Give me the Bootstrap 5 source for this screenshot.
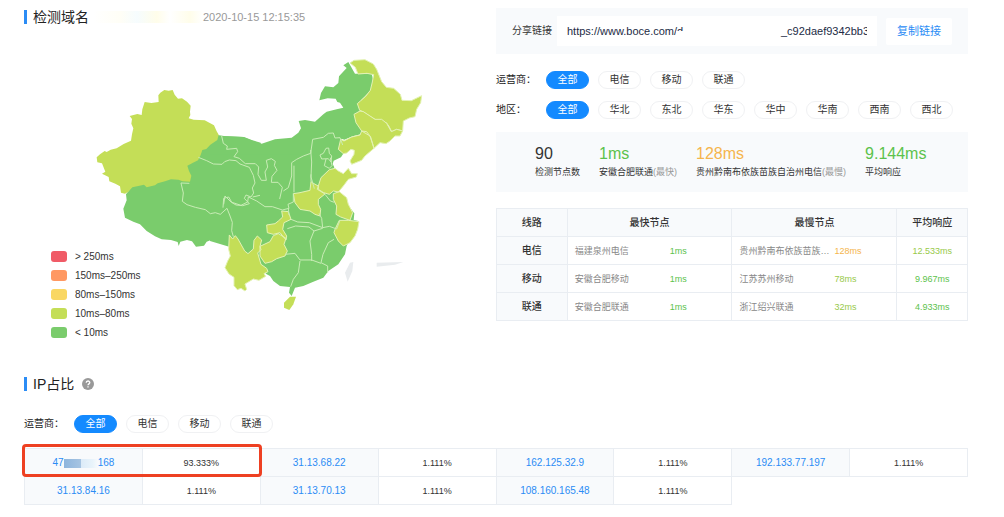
<!DOCTYPE html>
<html lang="zh-CN">
<head>
<meta charset="utf-8">
<meta name="viewport" content="width=device-width, initial-scale=1">
<title>检测域名</title>
<link href="https://cdn.jsdelivr.net/npm/bootstrap@5.3.0/dist/css/bootstrap.min.css" rel="stylesheet">
<style>
body{font-family:"Liberation Sans","Noto Sans CJK SC",sans-serif;font-size:10px;line-height:16px;color:#333;background:#fff}
.page{padding:8px 36px 13px 24px}
.title-bar{padding-top:1px;margin-bottom:26px}
.section-title{font-size:14px;line-height:20px;font-weight:400;color:#222;border-left:3px solid #2b8cf5;padding-left:6px;height:14px;margin:0}
.stamp{font-size:11px;color:#999}
.smudge{width:110px;height:12px;background:linear-gradient(90deg,#fff,#fffef6 25%,#f6fcfe 40%,#fffdea 58%,#fff 70%,#fffdea 88%,#fff)}
.map-box{max-width:430px}
.legend{left:27px;bottom:0;line-height:19px}
.swatch{width:16px;height:11px;border-radius:3px}
.panel{background:#f8fafc}
.share{height:46px;padding:0 16px}
.share label{width:45px}
.share input{height:30px;border:0;padding:0 10px;font-size:11px;color:#222b45;background:#fff;outline:0}
.share input:focus{outline:1px solid #b9dcff}
.veil{left:119px;top:15px;width:12px;height:9px;background:#fff}
.btn-copy{font-size:11px;line-height:16px;width:66px;height:27px;padding:0;margin-left:9px;background:#fff;color:#2b8cf5;border:0;border-radius:2px}
.filters{margin-top:17px}
.filters+.filters{margin-top:12px}
.filter-name{width:50px;color:#222}
.btn-pill{width:43px;height:18px;padding:0;font-size:10px;line-height:16px;border:1px solid #f0f1f3;border-radius:9px;background:#fff;color:#333}
.btn-pill.active{background:#148aff;border-color:#148aff;color:#fff}
.pills{gap:9px}
.stats{height:60px;padding:12px 36px 0 39px;margin:13px 0 16px;gap:19px;font-size:9px}
.stats strong{display:block;font-size:16px;line-height:20px;font-weight:400}
.stats small{font-size:9px;color:#999}
.data{margin:0;table-layout:fixed;font-size:9px;line-height:14px;color:#333}
.data>*>tr>*{padding:7px 7px 6px;background:none;border:1px solid #e9edf2;vertical-align:middle;color:inherit;text-align:center}
.data th{font-size:10px;font-weight:500}
.data .tint{background:#f8fafc}
.page .c-g{color:#5cc24c}
.page .c-l{color:#98c94a}
.page .c-o{color:#f5b54d}
.node{width:95px;flex:none;color:#888;text-align:left}
.ip a{font-size:10px;color:#2b8cf5;text-decoration:none}
.mosaic{width:34px;height:9px;background:linear-gradient(90deg,#8db5dd 0,#a6c4e2 50%,#dcebf8 51%,#e9f4fb 85%,#f8fafc)}
.red-frame{left:-2px;top:-4px;width:calc(25% + 4px);height:33px;border:3px solid #ee4022;border-radius:4px;pointer-events:none}
.ip-section{margin-top:35px}
.ip-section .filters{margin-top:24px}
.ip-box{margin-top:15px}
</style>
</head>
<body>
<main class="page">
<div class="row g-0">
<section class="col-6">
<div class="title-bar d-flex align-items-center">
<h1 class="section-title d-flex align-items-center">检测域名</h1><span class="smudge ms-1"></span><time class="stamp">2020-10-15 12:15:35</time>
</div>
<div class="map-box position-relative">
<svg class="d-block w-100" viewBox="24 50 430 291" role="img" aria-label="中国地图">
<g fill="#7acc6c">
<path transform="translate(100 150) scale(.33333)" d="M78 130l2 18-10 25 5 27 25 12 20 8 20 20 25 16 20 9 28 2 20 6 3 12 5-13 20-5 15 4 12 16 24-3 8-12 26-10 18 6 10-10 13-2 15 20 40 27 40 0V-25l-25-7-25-10-60-3-19-3L180 0z"/>
<path transform="translate(220 50) scale(.33333)" d="M0 255l70 3 30 12 25 8 40-13 50-5 20-15 8-13-7-22 19-3 30 5 25-22 10-8 30-7 20-5-10-15-8-2-5-10-24-1-25 6 5-22 12-20 25 3 15-13 2-20 23-25-10-8 15-10 20 35h50l5 20-7 30-30 30 0 30-15 10 5 25 17 20-7 17-25 6-25 10-8-3-4 25 10 18-8 13-22 10-3 10 5 10-25 45-10 65H0z"/>
<path transform="translate(210 160) scale(.33333)" d="M0-20h310l45 45 30 70 48 62-2 20 14 3-35 75-5 25-20 30-30 20-15 20-30 12-30 13-25 5-10 25-8-10 3-17-30-3-20-15-10-15-10-5-70-70L0 240z"/>
</g>
<g fill="#c4de57" stroke="#e3f2b4" stroke-width="3" stroke-linejoin="round">
<path stroke="none" transform="translate(90 50) scale(.33333)" d="M236 119l12-2 6 14 10 12 12-1 15 10 11 12-2 18 1 10-5 10 15 4 33 2 28 15 8 18 6 10-4 16-21 14-12 13-12 3-5 15-8 16-15 7-17 9 5 16 7 14-4 18-22-1-13-5-22-1-18 6-22 6-8 6-25 6-8-8-17 4-18 4-12 13-10 6-12-3-3-19-14-8-18-7-2-13-20-10 10-6-10-25-14-3-2-15 10-9 14-10 6 3 12-7 18-4 21-13 22-10 3-19 4-18-6-14 2-14-7-9 23-6 13 3 2-17 7-22 20 3 22-3-1-20 6-8 12-8z"/>
<path transform="translate(220 50) scale(.33333)" d="M390 36l12-8 33-2 25 13 10 16 15 37 14 17 22 3 20 18 5 18 28 1 31-15-3 21-12 20-5 22-17 4-18 9-2 30-18-5-15 7-8-16-8-11-20-2-14-8-16-10-20-13-10-4-7-20 25-22 14-18 6-25 4-22-20-4-27 2-8-20z"/>
<path transform="translate(220 50) scale(.33333)" d="M420 180l10 2 20 13 15 10 20 0 15 12 14 25 16-7 18 5-8 15-15 0-15 15-12 8-18-3-18 17-12-37-25-15-17-25-6-25zM425 240l15 2 12 16 10 34-27 23-10 13-30 12-5-10 12-20 1-12-10-3-13 11-10 2-15-13 7-30 10 5 23-12 25-6z"/>
<path transform="translate(210 160) scale(.33333)" d="M325 75l8-25 25-24 17-4 10 8 15 8 15-16 10 16 17 0-3 10-24 7-15 20-15 18-15-3-12 10-17-5-16-10zM250 98l20-3 30-7 3-26 9 6 13 7-3 10 23 14-20 16 0 15 7 15-2 20-15-5-15-10-30-5-15-20zM370 98l18-6 22 18 5 20 13 25-8 23-28-10-14-8 2-25-10-20zM388 178l27 0 32 4-4 23-8 20-15 20-20 10-15-15-13-25 3-10zM215 150l20 2 8 23-21 10-4 20 12 20-2 12-18-22-20 5-18-5-2-23 25-4 10-8 13-12zM150 256l30-14 10-18 15-6 23 14-6 18 10 20-7 15-25 8-15 9-20 5-15-22zM58 222l10 12 8-10 8 10 20 36 10 8 16-14 2-26 10-13 13 12-5 19 3 10-10 10 10 34 17 12 4 10-12 6 5 8-20 12-17-4-25 15 5 16-5 5-12-8-11 4-10-12 0-25-15-10-12-19 8-20 8-15-5-20z"/>
<path stroke="none" transform="translate(210 160) scale(.33333)" d="M222 425l18-18 18 0-8 23-12 17-16-7z"/>
</g>
<g fill="none" stroke="#c9ecb6" stroke-width="3" stroke-linejoin="round">
<path transform="translate(100 150) scale(.33333)" d="M268 97l-25-1 7 30-3 25 14 10 25 8 30 7 15 12 15-3 15 5 20-18 8 20 8 22-2 25 5 18M369 170l2-28 15-4 10 17 12 7 20 2 20-6-15-16 5-10 15 6 8-12-4-15 8-15-5-23-12-24-28-10-12-10-20-2-14 5-8 8-26-1-20-10-25-10M458 138l22-5"/>
<path transform="translate(220 50) scale(.33333)" d="M5 255l5 22 12 8-2 10 30-3 3 10-11 15 16 5 18 16 30 0 10 10-2 22 10 18 15 0-4-25 8-15-4-20 15-5 12 8-3 12 8 15-15 18-2 18 20 0 13 15-8 35M190 420l15-10 10-35 0-40 15-10 20-10 22-8 6-42 32-6 15-12 15-1 5 15 15-1 8 22M272 297l3 36-2 45 10 35M318 292l-8 15-10 5 5 12 20-1 8 10 2-18-7-8-2-16zM318 324l-5 20 15 8 8-8-5-24"/>
<path transform="translate(210 160) scale(.33333)" d="M250 98l0 25-16 7 3 12-20 5-30-10-22 0-25-17-25-12-2 15-20 10-30-10-18-18-4 25M252 94l0-80M303 62l0-22M235 142l2 20M243 175l20 8 35 2 40 15-3-28-8-15M338 200l20-4 22 8 10-26M232 203l25-8 40 3 15 12 26-8M312 210l-12 30 5 40 0 20M372 235l-17 10-16 35-6 25 20 10 0 20M225 280l30-3 15 20 35 0 28 10M270 300l-5 35-15 20-8 22M345 100l16 20 12 4"/>
</g>
<path fill="#e9ecee" transform="translate(210 160) scale(.33333)" d="M405 335l15-30 10-2-3 27-14 32zM500 305l80-2-25 8-55 6z"/>
</svg>
<div class="legend position-absolute">
<div class="d-flex align-items-center gap-2"><span class="swatch" style="background:#f05b67"></span>&gt; 250ms</div>
<div class="d-flex align-items-center gap-2"><span class="swatch" style="background:#ff9862"></span>150ms–250ms</div>
<div class="d-flex align-items-center gap-2"><span class="swatch" style="background:#f9d763"></span>80ms–150ms</div>
<div class="d-flex align-items-center gap-2"><span class="swatch" style="background:#c4de57"></span>10ms–80ms</div>
<div class="d-flex align-items-center gap-2"><span class="swatch" style="background:#7acc6c"></span>&lt; 10ms</div>
</div>
</div>
</section>
<section class="col-6">
<div class="panel share d-flex align-items-center">
<label for="url">分享链接</label>
<div class="position-relative flex-fill"><input id="url" class="w-100" readonly value="https://www.boce.com/d&nbsp;&nbsp;&nbsp;&nbsp;&nbsp;&nbsp;&nbsp;&nbsp;&nbsp;&nbsp;&nbsp;&nbsp;&nbsp;&nbsp;&nbsp;&nbsp;&nbsp;&nbsp;&nbsp;&nbsp;&nbsp;&nbsp;&nbsp;&nbsp;&nbsp;&nbsp;&nbsp;&nbsp;&nbsp;&nbsp;&nbsp;&nbsp;_c92daef9342bb3"><span class="veil position-absolute"></span></div>
<button class="btn btn-copy" type="button">复制链接</button>
</div>
<div class="filters d-flex align-items-center"><span class="filter-name">运营商：</span>
<div class="d-flex pills"><button class="btn btn-pill active" type="button">全部</button><button class="btn btn-pill" type="button">电信</button><button class="btn btn-pill" type="button">移动</button><button class="btn btn-pill" type="button">联通</button></div></div>
<div class="filters d-flex align-items-center"><span class="filter-name">地区：</span>
<div class="d-flex pills"><button class="btn btn-pill active" type="button">全部</button><button class="btn btn-pill" type="button">华北</button><button class="btn btn-pill" type="button">东北</button><button class="btn btn-pill" type="button">华东</button><button class="btn btn-pill" type="button">华中</button><button class="btn btn-pill" type="button">华南</button><button class="btn btn-pill" type="button">西南</button><button class="btn btn-pill" type="button">西北</button></div></div>
<div class="panel stats d-flex text-nowrap">
<div><strong>90</strong>检测节点数</div>
<div><strong class="c-g">1ms</strong>安徽合肥联通<small>(最快)</small></div>
<div><strong class="c-o">128ms</strong>贵州黔南布依族苗族自治州电信<small>(最慢)</small></div>
<div><strong class="c-g">9.144ms</strong>平均响应</div>
</div>
<table class="table data">
<colgroup><col style="width:15%"><col style="width:35%"><col style="width:35%"><col style="width:15%"></colgroup>
<thead><tr class="tint"><th>线路</th><th>最快节点</th><th>最慢节点</th><th>平均响应</th></tr></thead>
<tbody>
<tr><th class="tint">电信</th><td><div class="d-flex"><span class="node">福建泉州电信</span><span class="c-g">1ms</span></div></td><td><div class="d-flex"><span class="node">贵州黔南布依族苗族…</span><span class="c-o">128ms</span></div></td><td class="c-l">12.533ms</td></tr>
<tr><th class="tint">移动</th><td><div class="d-flex"><span class="node">安徽合肥移动</span><span class="c-g">1ms</span></div></td><td><div class="d-flex"><span class="node">江苏苏州移动</span><span class="c-l">78ms</span></div></td><td class="c-g">9.967ms</td></tr>
<tr><th class="tint">联通</th><td><div class="d-flex"><span class="node">安徽合肥联通</span><span class="c-g">1ms</span></div></td><td><div class="d-flex"><span class="node">浙江绍兴联通</span><span class="c-l">32ms</span></div></td><td class="c-g">4.933ms</td></tr>
</tbody></table>
</section>
</div>
<section class="ip-section">
<div class="d-flex align-items-center gap-2">
<h2 class="section-title d-flex align-items-center">IP占比</h2>
<svg width="12" height="12" viewBox="0 0 12 12" role="img" aria-label="帮助"><circle cx="6" cy="6" r="6" fill="#999"/><path d="M4.200 4.800c0-2.400 3.600-2.300 3.600-.2C7.800 5.900 6 5.900 6 7.300M6 8.300v1.200" fill="none" stroke="#fff" stroke-width="1.300"/></svg>
</div>
<div class="filters d-flex align-items-center"><span class="filter-name">运营商：</span>
<div class="d-flex pills"><button class="btn btn-pill active" type="button">全部</button><button class="btn btn-pill" type="button">电信</button><button class="btn btn-pill" type="button">移动</button><button class="btn btn-pill" type="button">联通</button></div></div>
<div class="ip-box position-relative">
<table class="table data ip">
<tbody>
<tr><td class="tint"><a href="#" class="d-inline-flex align-items-center">47<span class="mosaic"></span>168</a></td><td>93.333%</td><td class="tint"><a href="#">31.13.68.22</a></td><td>1.111%</td><td class="tint"><a href="#">162.125.32.9</a></td><td>1.111%</td><td class="tint"><a href="#">192.133.77.197</a></td><td>1.111%</td></tr>
<tr><td class="tint"><a href="#">31.13.84.16</a></td><td>1.111%</td><td class="tint"><a href="#">31.13.70.13</a></td><td>1.111%</td><td class="tint"><a href="#">108.160.165.48</a></td><td>1.111%</td></tr>
</tbody></table>
<div class="red-frame position-absolute"></div>
</div>
</section>
</main>
<script src="https://cdn.jsdelivr.net/npm/bootstrap@5.3.0/dist/js/bootstrap.bundle.min.js"></script>
</body>
</html>
